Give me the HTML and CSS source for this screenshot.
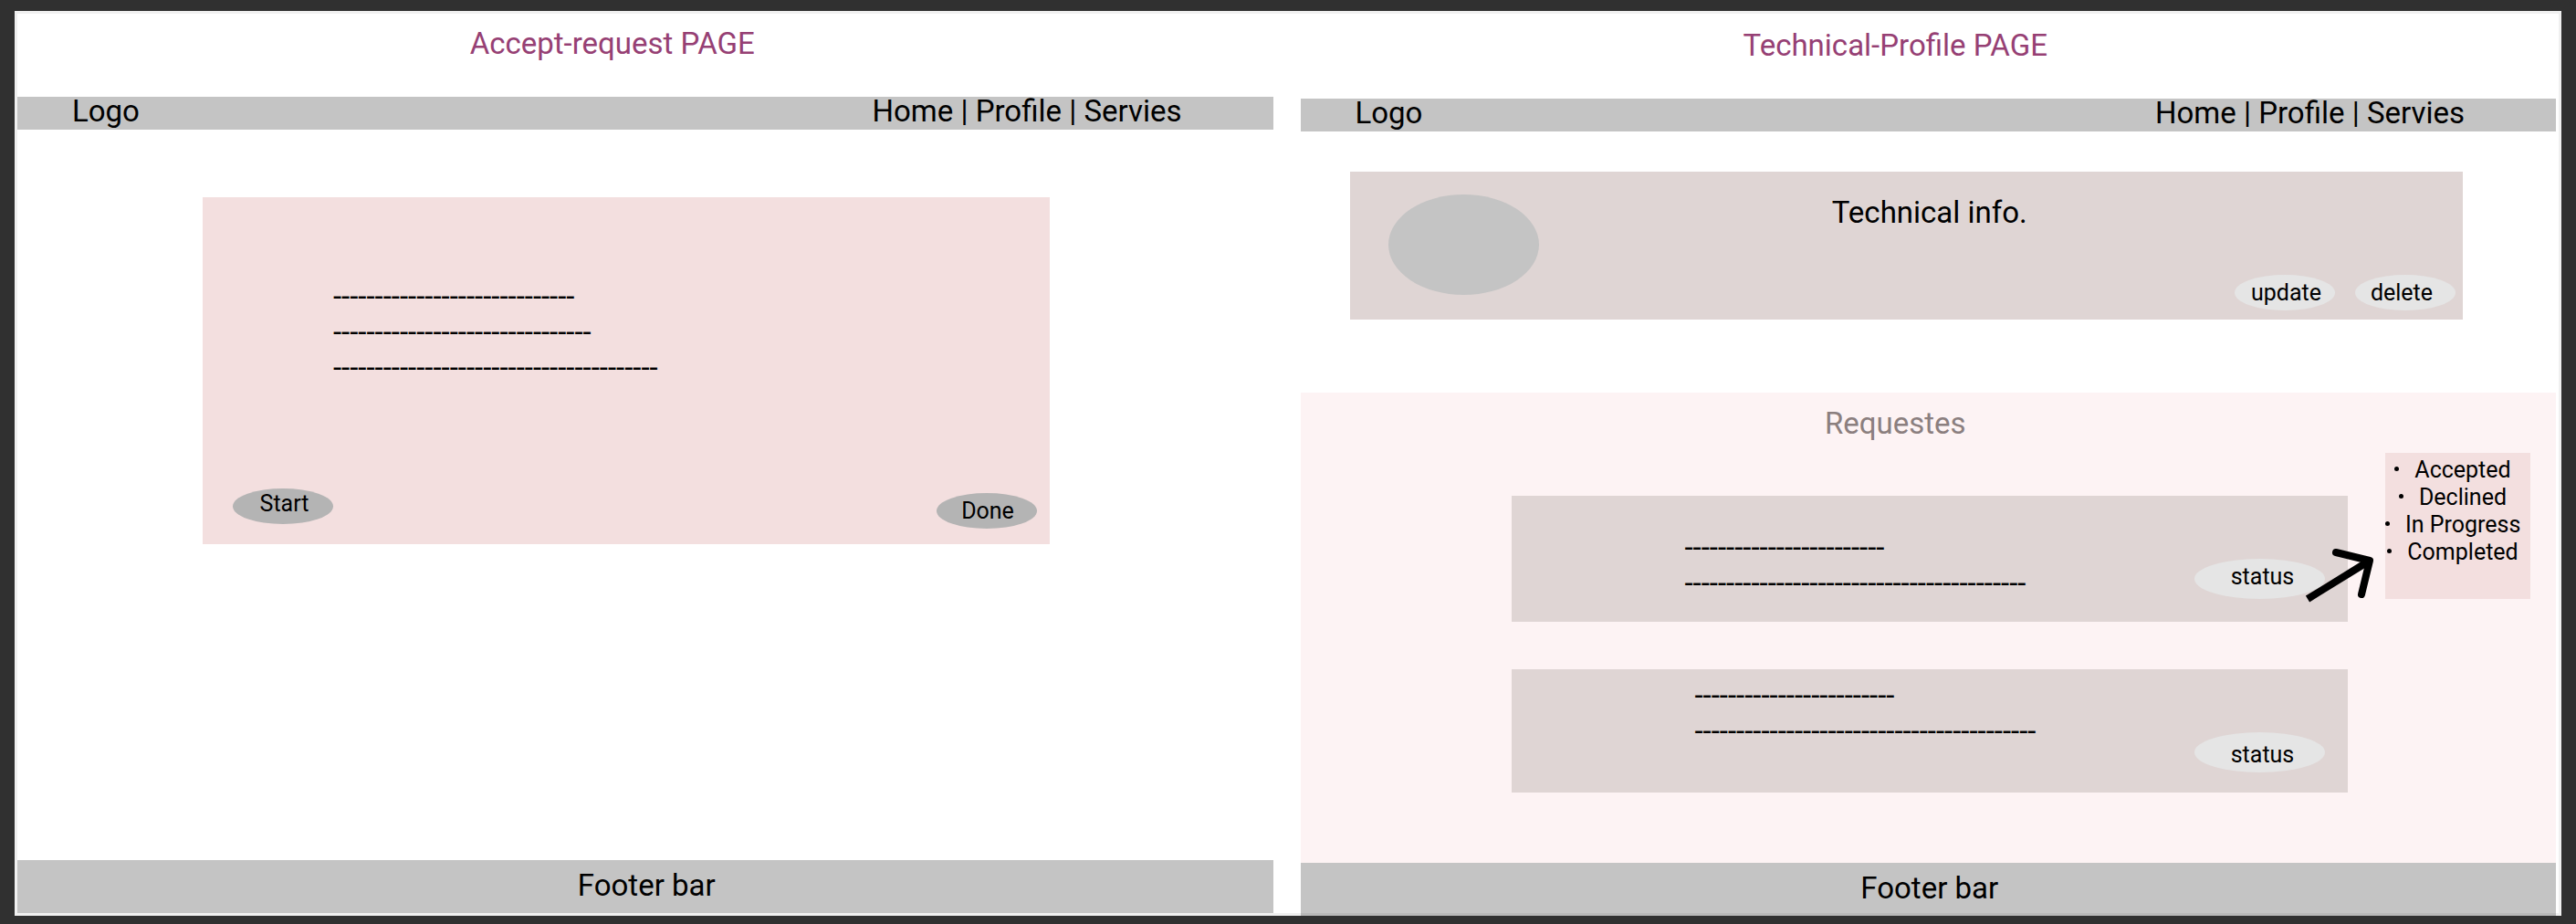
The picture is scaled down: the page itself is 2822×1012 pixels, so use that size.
FILE: index.html
```html
<!DOCTYPE html>
<html lang="en">
<head>
  <meta charset="utf-8">
  <title>Wireframes</title>
  <link rel="stylesheet" href="styles.css">
</head>
<body>
  <main class="board">
    <section class="page">
      <h1 class="page-title">Accept-request PAGE</h1>
      <header class="topbar">
        <a class="link" href="#">Logo</a>
        <nav><a class="link" href="#">Home</a> | <a class="link" href="#">Profile</a> | <a class="link" href="#">Servies</a></nav>
      </header>
      <article class="job">
        <div class="job-lines">
          <p>-----------------------------</p>
          <p>-------------------------------</p>
          <p>---------------------------------------</p>
        </div>
        <div class="job-actions">
          <button class="pill pill-dark pill-high" type="button">Start</button>
          <button class="pill pill-dark" type="button">Done</button>
        </div>
      </article>
      <footer class="footer">Footer bar</footer>
    </section>

    <section class="page page-profile">
      <h1 class="page-title">Technical-Profile PAGE</h1>
      <header class="topbar">
        <a class="link" href="#">Logo</a>
        <nav><a class="link" href="#">Home</a> | <a class="link" href="#">Profile</a> | <a class="link" href="#">Servies</a></nav>
      </header>
      <article class="info">
        <div class="avatar"></div>
        <div class="info-body">
          <h2 class="info-title">Technical info.</h2>
          <div class="info-actions">
            <button class="pill" type="button">update</button>
            <button class="pill pill-left" type="button">delete</button>
          </div>
        </div>
      </article>
      <section class="requests">
        <h2 class="requests-title">Requestes</h2>
        <div class="requests-body">
          <div class="request-list">
            <article class="request request-first">
              <div>
                <p>------------------------</p>
                <p>-----------------------------------------</p>
              </div>
              <button class="pill pill-wide pill-high" type="button">status</button>
              <svg class="arrow" width="80" height="66" viewBox="0 0 80 66" fill="none" stroke="#000" stroke-width="8" aria-hidden="true">
                <path d="M4 56 L72 14"/>
                <path d="M35 5 L72 14 L63 51" stroke-linecap="round" stroke-linejoin="round"/>
              </svg>
            </article>
            <article class="request request-second">
              <div>
                <p>------------------------</p>
                <p>-----------------------------------------</p>
              </div>
              <button class="pill pill-wide pill-low" type="button">status</button>
            </article>
          </div>
          <ul class="states">
            <li>Accepted</li>
            <li>Declined</li>
            <li>In Progress</li>
            <li>Completed</li>
          </ul>
        </div>
      </section>
      <footer class="footer">Footer bar</footer>
    </section>
  </main>
</body>
</html>
```
FILE: styles.css
```css
* {
  box-sizing: border-box;
}

body {
  margin: 0;
  min-height: 100vh;
  display: flex;
  padding: 12px 16px 9px;
  background: #303030;
  color: #000;
  font-family: Roboto, "Liberation Sans", sans-serif;
  font-size: 33px;
  line-height: 39px;
}

h1, h2, p, ul {
  margin: 0;
  padding: 0;
  font-size: inherit;
  font-weight: 400;
}

.board {
  position: relative;
  flex: 1;
  display: grid;
  grid-template-columns: 1fr 1fr;
  gap: 30px;
  padding: 0 6px 0 3px;
  background: #fff;
}

/* soft inner edge drawn over the pages */
.board::after {
  content: "";
  position: absolute;
  inset: 0;
  border: 3px solid rgba(0, 0, 0, 0.06);
  pointer-events: none;
}

.page {
  display: flex;
  flex-direction: column;
  padding-bottom: 3px;
}

.page-profile {
  padding-top: 2px;
  padding-bottom: 0;
}

.page-title {
  height: 94px;
  padding: 16px 72px 0 0;
  color: #964074;
  text-align: center;
}

.topbar {
  display: flex;
  justify-content: space-between;
  padding: 0 100px 4px 60px;
  background: #c4c4c4;
  line-height: 32px;
}

.link {
  color: inherit;
  text-decoration: none;
}

.footer {
  margin-top: auto;
  padding: 8px 0 11px 3px;
  background: #c4c4c4;
  text-align: center;
}

.pill {
  width: 110px;
  height: 39px;
  padding: 0 0 0 3px;
  border: 0;
  border-radius: 50%;
  background: #e5e5e5;
  color: #000;
  font-family: inherit;
  font-size: 25px;
  line-height: 30px;
}

.pill-dark {
  background: #b4b4b4;
}

.pill-wide {
  width: 143px;
  height: 44px;
  padding-left: 6px;
}

.pill-high {
  padding-bottom: 5px;
}

.pill-low {
  padding-top: 5px;
}

.pill-left {
  padding: 0 8px 0 0;
}

.job {
  display: flex;
  flex-direction: column;
  justify-content: space-between;
  min-height: 380px;
  margin: 74px 245px 0 203px;
  padding: 89px 14px 17px 33px;
  background: #f3dfdf;
}

.job-lines {
  padding-left: 110px;
}

.job-actions {
  display: flex;
  justify-content: space-between;
  align-items: flex-end;
  height: 44px;
}

.job-actions .pill-high {
  align-self: flex-start;
}

.info {
  display: flex;
  min-height: 162px;
  margin: 44px 102px 0 54px;
  padding: 25px 8px 10px 42px;
  background: #dfd5d4;
}

.avatar {
  width: 165px;
  height: 110px;
  border-radius: 50%;
  background: #c4c4c4;
}

.info-body {
  flex: 1;
  display: flex;
  flex-direction: column;
  justify-content: space-between;
}

.info-title {
  padding-right: 148px;
  text-align: center;
}

.info-actions {
  display: flex;
  justify-content: flex-end;
  gap: 22px;
}

.requests {
  flex: 1;
  margin-top: 80px;
  padding-top: 14px;
  background: #fdf3f4;
}

.requests-title {
  padding-right: 72px;
  color: #8b7f7f;
  text-align: center;
}

.requests-body {
  display: flex;
  align-items: flex-start;
  gap: 41px;
  padding: 13px 28px 0 231px;
}

.request-list {
  flex: 1;
  display: flex;
  flex-direction: column;
  gap: 52px;
  padding-top: 47px;
}

.request {
  position: relative;
  display: flex;
  justify-content: space-between;
  padding-right: 25px;
  background: #dfd5d4;
}

.request .pill {
  margin-top: 69px;
}

.request-first {
  min-height: 138px;
  padding-left: 190px;
}

.request-first p:first-child {
  padding-top: 37px;
}

.request-second {
  min-height: 135px;
  padding-left: 201px;
}

.request-second p:first-child {
  padding-top: 9px;
}

.arrow {
  position: absolute;
  right: -32px;
  top: 57px;
}

.states {
  width: 159px;
  min-height: 160px;
  padding: 4px 11px 0 0;
  background: #f3dfdf;
  font-size: 25px;
  line-height: 30px;
  list-style: none;
  text-align: center;
  white-space: nowrap;
}

.states li::before {
  content: "";
  display: inline-block;
  width: 5px;
  height: 5px;
  margin-right: 17px;
  border-radius: 50%;
  background: #000;
  vertical-align: 7px;
}
```
